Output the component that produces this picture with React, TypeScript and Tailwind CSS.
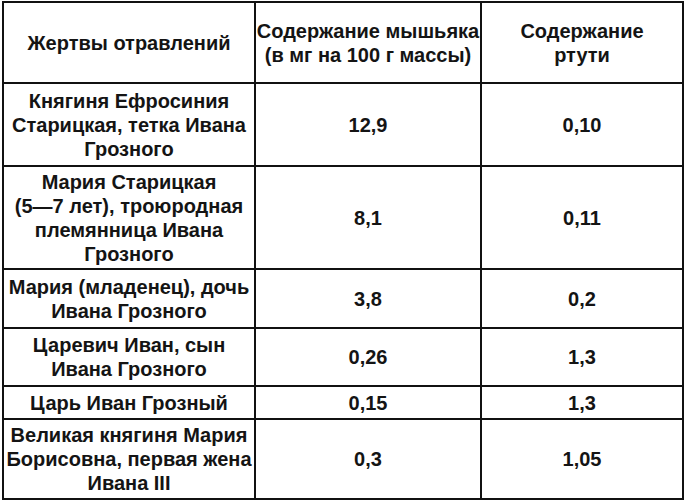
import React from "react";

const rows: { name: string[]; a: string; m: string; h: string }[] = [
  { name: ["Княгиня Ефросиния", "Старицкая, тетка Ивана", "Грозного"], a: "12,9", m: "0,10", h: "h-[83px]" },
  { name: ["Мария Старицкая", "(5—7 лет), троюродная", "племянница Ивана", "Грозного"], a: "8,1", m: "0,11", h: "h-[103px]" },
  { name: ["Мария (младенец), дочь", "Ивана Грозного"], a: "3,8", m: "0,2", h: "h-[59px]" },
  { name: ["Царевич Иван, сын", "Ивана Грозного"], a: "0,26", m: "1,3", h: "h-[58px]" },
  { name: ["Царь Иван Грозный"], a: "0,15", m: "1,3", h: "h-[33px]" },
  { name: ["Великая княгиня Мария", "Борисовна, первая жена", "Ивана III"], a: "0,3", m: "1,05", h: "h-[80px]" },
];

export default function App() {
  return (
    <div className="w-[684px] h-[500px] bg-white pt-[1px] pl-[2px]" style={{ fontFamily: '"Liberation Sans", Arial, sans-serif' }}>
      <table className="border-collapse w-[680px] table-fixed text-[20px] leading-[24px] font-bold text-[#141414]">
        <colgroup>
          <col className="w-[252px]" />
          <col className="w-[226px]" />
          <col className="w-[202px]" />
        </colgroup>
        <tbody>
          <tr className="h-[81px]">
            <td className="border-2 border-[#111] text-center align-middle p-0">Жертвы отравлений</td>
            <td className="border-2 border-[#111] text-center align-middle p-0 whitespace-nowrap">
              Содержание мышьяка
              <br />
              (в мг на 100 г массы)
            </td>
            <td className="border-2 border-[#111] text-center align-middle p-0">
              Содержание
              <br />
              ртути
            </td>
          </tr>
          {rows.map((r, i) => (
            <tr key={i} className={r.h}>
              <td className="border-2 border-[#111] text-center align-middle p-0 whitespace-nowrap">
                {r.name.map((l, j) => (
                  <div key={j}>{l}</div>
                ))}
              </td>
              <td className="border-2 border-[#111] text-center align-middle p-0">{r.a}</td>
              <td className="border-2 border-[#111] text-center align-middle p-0">{r.m}</td>
            </tr>
          ))}
        </tbody>
      </table>
    </div>
  );
}
